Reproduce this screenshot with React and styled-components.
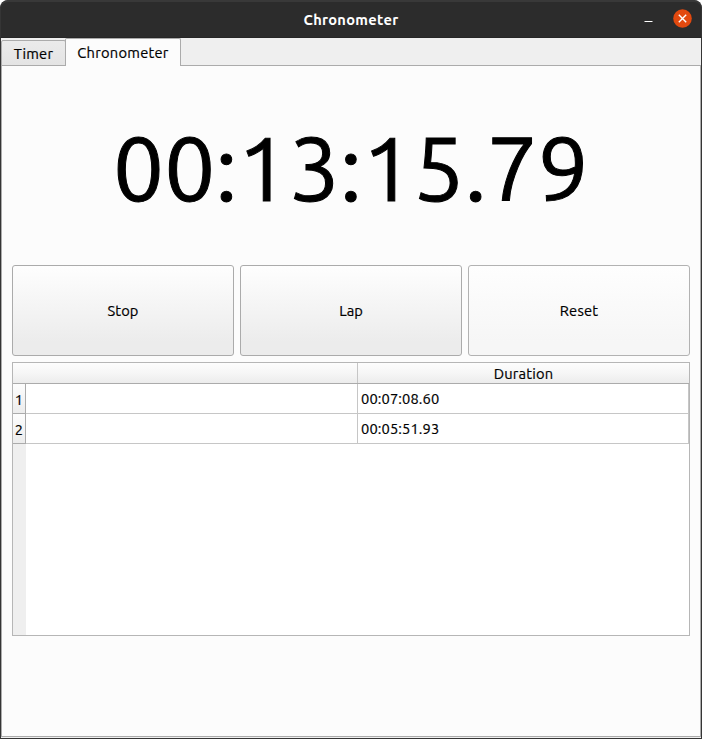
import React from "react";
import styled, { createGlobalStyle } from "styled-components";

const GlobalStyle = createGlobalStyle`
  * { box-sizing: border-box; }
  body { margin: 0; background: #fff; font-family: Ubuntu, "Noto Sans", sans-serif; font-size: 14.67px; color: #000; -webkit-text-stroke: 0.2px; }
  button { font: inherit; color: inherit; padding: 0; margin: 0; }
`;

const Window = styled.div`
  width: 702px;
  height: 739px;
  display: flex;
  flex-direction: column;
  padding: 0 1px 1px;
  background: #353535;
  border-radius: 8px 8px 0 0;
  overflow: hidden;
`;

const TitleBar = styled.header`
  height: 38px;
  flex: none;
  margin: 0 -1px;
  display: grid;
  grid-template-columns: 1fr auto 1fr;
  align-items: center;
  background: #2c2c2c;
  border: 1px solid #353535;
  border-top: 2px solid #393939;
  border-bottom-color: #262626;
  border-radius: 8px 8px 0 0;
`;

const Title = styled.h1`
  grid-column: 2;
  margin: 0;
  font-size: 14.67px;
  line-height: 20px;
  font-weight: 700;
  letter-spacing: ${(p) => p.$spacing}px;
  color: #fff;
  -webkit-text-stroke: 0;
`;

const WindowControls = styled.div`
  display: flex;
  justify-content: flex-end;
  align-items: center;
  gap: 20px;
  padding-right: 9px;
  padding-bottom: 2px;
`;

const ControlButton = styled.button`
  border: 0;
  background: none;
  display: flex;
`;

const Body = styled.main`
  flex: 1;
  display: flex;
  flex-direction: column;
  background: #efefef;
  padding-bottom: 1px;
`;

const TabBar = styled.nav`
  height: 28px;
  flex: none;
  display: flex;
  align-items: flex-end;
`;

const Tab = styled.button`
  width: ${(p) => p.$width}px;
  height: ${(p) => (p.$active ? 28 : 26)}px;
  margin-left: ${(p) => (p.$active ? -1 : 0)}px;
  align-self: ${(p) => (p.$active ? "flex-start" : "flex-end")};
  position: relative;
  z-index: ${(p) => (p.$active ? 1 : 0)};
  padding-top: ${(p) => (p.$active ? 1 : 2)}px;
  border: 1px solid #ababab;
  border-bottom: ${(p) => (p.$active ? "0" : "1px solid #ababab")};
  border-radius: 2px 2px 0 0;
  background: ${(p) => (p.$active ? "#fcfcfc" : "linear-gradient(#ebebeb, #e4e4e4)")};
  letter-spacing: ${(p) => p.$spacing}px;
  line-height: 20px;
`;

const Panel = styled.section`
  flex: 1;
  display: flex;
  flex-direction: column;
  margin-top: -1px;
  padding: 0 10px;
  border: 1px solid #ababab;
  background: #fcfcfc;
`;

const Time = styled.div`
  height: 199px;
  flex: none;
  display: flex;
  align-items: center;
  justify-content: center;
  font-size: 90.67px;
  line-height: 120px;
  padding-top: 3px;
  -webkit-text-stroke: 1px;
`;

const Actions = styled.div`
  display: grid;
  grid-template-columns: repeat(3, 1fr);
  gap: 6px;
  height: 91px;
  flex: none;
`;

const ActionButton = styled.button`
  border: 1px solid ${(p) => (p.$light ? "#b2b2b2" : "#ababab")};
  border-radius: 3px;
  background: linear-gradient(${(p) => (p.$light ? "#fefefe, #f6f6f6 85%" : "#fefefe, #ececec 85%")});
  letter-spacing: ${(p) => p.$spacing}px;
`;

const Table = styled.div`
  height: 274px;
  flex: none;
  margin-top: 6px;
  border: 1px solid #b6b6b6;
  background: #fff;
  display: flex;
  flex-direction: column;
`;

const HeaderRow = styled.div`
  display: grid;
  grid-template-columns: 345px 1fr;
  height: 21px;
  flex: none;
  background: linear-gradient(#fdfdfd, #f6f6f6 50%, #ececec);
  border-bottom: 1px solid #ababab;
`;

const HeaderCell = styled.div`
  border-right: ${(p) => (p.$divided ? "1px solid #c6c6c6" : "0")};
  text-align: center;
  line-height: 22px;
  height: 20px;
  letter-spacing: 0.2px;
`;

const Row = styled.div`
  display: grid;
  grid-template-columns: 13px 332px 1fr;
  grid-template-rows: 30px;
  height: 30px;
  flex: none;
`;

const RowNumber = styled.div`
  background: linear-gradient(#fdfdfd, #ececec);
  border-right: 1px solid #ababab;
  border-bottom: 1px solid #ababab;
  text-align: center;
  line-height: 31px;
`;

const Cell = styled.div`
  border-right: 1px solid #c6c6c6;
  border-bottom: 1px solid #c6c6c6;
  padding-left: 3px;
  line-height: 29px;
  letter-spacing: 0.13px;
`;

const EmptyGutter = styled.div`
  flex: 1;
  width: 13px;
  background: #efefef;
`;

const laps = ["00:07:08.60", "00:05:51.93"];

export default function App() {
  return (
    <>
      <GlobalStyle />
      <Window>
        <TitleBar>
          <Title $spacing={0.3}>Chronometer</Title>
          <WindowControls>
            <ControlButton aria-label="Minimize">
              <svg width="9" height="19" viewBox="0 0 9 19">
                <path d="M.5 12.5H8.5" stroke="#fff" />
              </svg>
            </ControlButton>
            <ControlButton aria-label="Close">
              <svg width="19" height="19" viewBox="0 0 19 19">
                <circle cx="9.5" cy="9.5" r="9.3" fill="#e2490f" />
                <path d="M5.8 5.8L13.2 13.2M13.2 5.8L5.8 13.2" stroke="#fff" strokeWidth="1.4" />
              </svg>
            </ControlButton>
          </WindowControls>
        </TitleBar>
        <Body>
          <TabBar>
            <Tab $width={65} $spacing={0.2}>Timer</Tab>
            <Tab $width={116} $spacing={0.26} $active>Chronometer</Tab>
          </TabBar>
          <Panel>
            <Time>00:13:15.79</Time>
            <Actions>
              <ActionButton $spacing={0.1}>Stop</ActionButton>
              <ActionButton $spacing={0}>Lap</ActionButton>
              <ActionButton $spacing={0.2} $light>Reset</ActionButton>
            </Actions>
            <Table>
              <HeaderRow>
                <HeaderCell $divided />
                <HeaderCell>Duration</HeaderCell>
              </HeaderRow>
              {laps.map((lap, i) => (
                <Row key={lap}>
                  <RowNumber>{i + 1}</RowNumber>
                  <Cell />
                  <Cell>{lap}</Cell>
                </Row>
              ))}
              <EmptyGutter />
            </Table>
          </Panel>
        </Body>
      </Window>
    </>
  );
}
